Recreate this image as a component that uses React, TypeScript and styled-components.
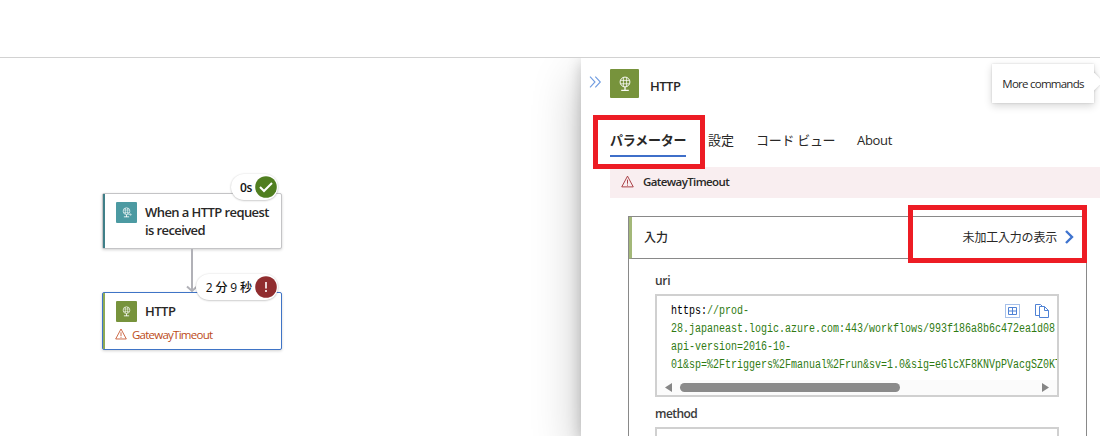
import React from 'react';
import styled, { createGlobalStyle } from 'styled-components';

const Global = createGlobalStyle`
  * { box-sizing: border-box; }
  html, body { margin: 0; overflow: hidden; background: #fff; }
  body { font-family: "Open Sans", "Noto Sans CJK JP", sans-serif; color: #292827; font-size: 13px; }
`;

const Page = styled.div`
  width: 1100px;
  height: 436px;
  display: flex;
  flex-direction: column;
  overflow: hidden;
  position: relative;
`;
const TopBar = styled.header`
  flex: 0 0 58px;
  border-bottom: 1px solid #d2d2d2;
`;
const Main = styled.main`
  flex: 1;
  display: flex;
  min-height: 0;
  overflow: hidden;
`;
const Canvas = styled.section`
  flex: 0 0 581px;
  position: relative;
`;
const Text = styled.span<{ $size?: number; $weight?: number; $spacing?: number; $color?: string }>`
  font-size: ${p => p.$size ?? 13}px;
  font-weight: ${p => p.$weight ?? 400};
  letter-spacing: ${p => p.$spacing ?? 0}px;
  color: ${p => p.$color ?? '#292827'};
  white-space: nowrap;
`;

/* workflow canvas */
const Node = styled.div<{ $top: number; $height: number; $border: string; $accent: string; $accentWidth: number }>`
  position: absolute;
  left: 102px;
  top: ${p => p.$top}px;
  width: 180px;
  height: ${p => p.$height}px;
  background: #fff;
  border: 1px solid ${p => p.$border};
  border-radius: 2px;
  box-shadow: 0 1px 3px rgba(0, 0, 0, 0.18);
  &::before {
    content: '';
    position: absolute;
    left: 0;
    top: 0;
    bottom: 0;
    width: ${p => p.$accentWidth}px;
    background: ${p => p.$accent};
  }
`;
const NodeRow = styled.div`
  display: flex;
  gap: 8px;
  padding: 8px 0 0 13px;
`;
const NodeTitle = styled.div`
  display: flex;
  flex-direction: column;
  line-height: 18px;
  padding-top: 1px;
`;
const NodeError = styled.div`
  display: flex;
  align-items: center;
  gap: 5px;
  height: 16px;
  padding-left: 12px;
  margin-top: 4px;
`;
const Tile = styled.div<{ $size: number; $color: string }>`
  flex: none;
  width: ${p => p.$size}px;
  height: ${p => p.$size}px;
  border-radius: 1px;
  background: ${p => p.$color};
  display: flex;
  align-items: center;
  justify-content: center;
`;
const Pill = styled.div<{ $top: number; $left: number; $width: number }>`
  position: absolute;
  top: ${p => p.$top}px;
  left: ${p => p.$left}px;
  width: ${p => p.$width}px;
  height: 26px;
  border-radius: 13px;
  background: #fff;
  box-shadow: 0 0.5px 2px rgba(0, 0, 0, 0.3);
  display: flex;
  align-items: center;
  justify-content: flex-end;
  gap: 3px;
  padding-right: 1px;
`;
const Arrow = styled.svg`
  position: absolute;
  left: 184px;
  top: 191px;
`;

/* details panel */
const Panel = styled.aside`
  flex: 1;
  min-width: 0;
  background: #fff;
  box-shadow: 0 20px 46px rgba(0, 0, 0, 0.24), 0 4px 14px rgba(0, 0, 0, 0.2);
  display: flex;
  flex-direction: column;
  position: relative;
  & > * { flex-shrink: 0; }
`;
const PanelHeader = styled.div`
  display: flex;
  align-items: center;
  height: 40px;
  margin-top: 5px;
  padding: 1px 0 0 8px;
`;
const HeaderTitle = styled.div`
  margin: 5px 0 0 11px;
`;
const Collapse = styled.div`
  width: 21px;
  display: flex;
  padding-bottom: 3px;
`;
const Tooltip = styled.div`
  position: absolute;
  left: 411px;
  top: 6px;
  width: 102px;
  height: 39px;
  background: #fff;
  box-shadow: 0 3px 8px rgba(0, 0, 0, 0.16), 0 0 2px rgba(0, 0, 0, 0.15);
  display: flex;
  align-items: center;
  justify-content: center;
`;
const Beak = styled.div`
  position: absolute;
  left: 513px;
  top: 5px;
  width: 6px;
  height: 36px;
  overflow: hidden;
  &::after {
    content: '';
    position: absolute;
    left: -9px;
    top: 11px;
    width: 15px;
    height: 15px;
    background: #fff;
    box-shadow: 0 0 3px rgba(0, 0, 0, 0.2);
    transform: rotate(45deg);
  }
`;
const Tabs = styled.nav`
  display: flex;
  gap: 22px;
  height: 31px;
  margin: 23px 0 0 29px;
`;
const Tab = styled.div<{ $active?: boolean; $width: number }>`
  width: ${p => p.$width}px;
  height: 31px;
  line-height: 28px;
  border-bottom: 2px solid ${p => (p.$active ? '#3f6fc9' : 'transparent')};
`;
const ErrorBar = styled.div`
  display: flex;
  align-items: center;
  gap: 9px;
  height: 31px;
  margin: 10px 0 0 29px;
  padding: 0 0 2px 11px;
  background: #f9eef0;
`;
const Card = styled.div`
  width: 459px;
  margin: 18px 0 0 47px;
  border: 1px solid #898989;
  border-bottom: 0;
`;
const CardHeader = styled.div`
  height: 42px;
  border-bottom: 1px solid #898989;
  border-left: 3px solid #a3b878;
  display: flex;
  align-items: center;
  justify-content: space-between;
  padding: 0 12px 1px 12px;
`;
const RawLink = styled.div`
  display: flex;
  align-items: center;
  gap: 8px;
`;
const CardBody = styled.div`
  padding: 12px 27px 0 26px;
`;
const Label = styled.div`
  height: 23px;
  line-height: 18px;
`;
const Field = styled.div<{ $height: number }>`
  position: relative;
  width: 404px;
  height: ${p => p.$height}px;
  border: 2px solid #d0d0d0;
  margin-bottom: 7px;
  overflow: hidden;
  display: flex;
  flex-direction: column;
`;
const Code = styled.pre`
  flex: 1;
  width: 480px;
  margin: 0;
  padding: 6px 0 0 16.8px;
  font-family: "Liberation Mono", monospace;
  font-size: 12px;
  line-height: 18px;
  transform: scaleX(0.8333);
  transform-origin: 0 0;
  color: #2f7a12;
`;
const Scheme = styled.span`
  color: #000;
`;
const FieldTools = styled.div`
  position: absolute;
  right: 8px;
  top: 8px;
  display: flex;
  gap: 15px;
`;
const ScrollBar = styled.div`
  height: 15px;
  background: #fbfbfb;
  display: flex;
  align-items: center;
  padding: 0 8px;
`;
const Thumb = styled.div`
  width: 220px;
  height: 9px;
  border-radius: 5px;
  background: #8a8a8a;
  margin: 0 auto 0 8px;
`;
const Highlight = styled.div<{ $x: number; $y: number; $w: number; $h: number }>`
  position: absolute;
  left: ${p => p.$x}px;
  top: ${p => p.$y}px;
  width: ${p => p.$w}px;
  height: ${p => p.$h}px;
  border: 5px solid #ed1c24;
`;

const Globe = ({ size, arrow }: { size: number; arrow?: boolean }) => (
  <svg width={size} height={size} viewBox="0 0 16 16" fill="none" stroke="#fff" strokeWidth="1" strokeOpacity=".95">
    <circle cx="8" cy="6" r="4.9" />
    <path d="M3.6 4.4h8.8M3.6 7.8h8.8M6.4 1.4v9.2M9.6 1.4v9.2" strokeWidth=".8" />
    <path d="M8 11v3.6M4.2 14.3h7.6" strokeWidth="1.3" />
    {arrow && <path d="M11 11h4M13.5 9.6 15 11l-1.5 1.4" strokeWidth=".9" />}
  </svg>
);
const Warning = ({ size, color }: { size: number; color: string }) => (
  <svg width={size} height={size} viewBox="0 0 14 14" fill="none" stroke={color}>
    <path d="M7 1.2 13.2 12.8H.8Z" />
    <path d="M7 5v4.4M7 10.3v1.2" />
  </svg>
);

export default function App() {
  return (
    <>
      <Global />
      <Page>
        <TopBar />
        <Main>
          <Canvas>
            <Node $top={135} $height={56} $border="#c4c4c6" $accent="#3f7f88" $accentWidth={2}>
              <NodeRow>
                <Tile $size={21} $color="#4c9aa2"><Globe size={11} arrow /></Tile>
                <NodeTitle>
                  <Text $weight={600} $spacing={-0.58}>When a HTTP request</Text>
                  <Text $weight={600} $spacing={-0.6}>is received</Text>
                </NodeTitle>
              </NodeRow>
            </Node>
            <Arrow width="16" height="44" viewBox="0 0 16 44" fill="none" stroke="#b1b1b7" strokeWidth="2">
              <path d="M8 0v42M3 37.5l5 4.5 5-4.5" />
            </Arrow>
            <Node $top={234} $height={58} $border="#3f74c6" $accent="#8faa55" $accentWidth={2}>
              <NodeRow>
                <Tile $size={21} $color="#77933c"><Globe size={11} /></Tile>
                <NodeTitle>
                  <Text $weight={600} $spacing={-0.5}>HTTP</Text>
                </NodeTitle>
              </NodeRow>
              <NodeError>
                <Warning size={12} color="#c4532d" />
                <Text $size={11.5} $spacing={-0.75} $color="#bc4b20">GatewayTimeout</Text>
              </NodeError>
            </Node>
            <Pill $top={116} $left={231} $width={47}>
              <Text $size={12} $weight={600} $spacing={-0.4} $color="#111">0s</Text>
              <svg width="22" height="22" viewBox="0 0 22 22">
                <circle cx="11" cy="11" r="10.8" fill="#507e20" />
                <path d="m5 11 4 4 8-8" fill="none" stroke="#fff" strokeWidth="2" />
              </svg>
            </Pill>
            <Pill $top={216} $left={196} $width={82}>
              <Text $size={12} $weight={500} $spacing={-0.1} $color="#111">2 分 9 秒</Text>
              <svg width="22" height="22" viewBox="0 0 22 22">
                <circle cx="11" cy="11" r="10.8" fill="#902d2f" />
                <path d="M11 6v6.5M11 14v2" fill="none" stroke="#fff" strokeWidth="1.6" />
              </svg>
            </Pill>
          </Canvas>
          <Panel>
            <PanelHeader>
              <Collapse>
                <svg width="13" height="12" viewBox="0 0 13 12" fill="none" stroke="#6f9be0" strokeWidth="1.1">
                  <path d="m1 .7 5 5.3-5 5.3M6.3.7l5 5.3-5 5.3" />
                </svg>
              </Collapse>
              <Tile $size={29} $color="#77933c"><Globe size={16} /></Tile>
              <HeaderTitle><Text $weight={600} $spacing={-0.5}>HTTP</Text></HeaderTitle>
            </PanelHeader>
            <Tooltip><Text $size={11.5} $spacing={-0.75}>More commands</Text></Tooltip>
            <Beak />
            <Tabs>
              <Tab $active $width={76}><Text $weight={700} $spacing={-0.2}>パラメーター</Text></Tab>
              <Tab $width={26}><Text>設定</Text></Tab>
              <Tab $width={79}><Text $spacing={-0.3}>コード ビュー</Text></Tab>
              <Tab $width={35}><Text $spacing={-0.3}>About</Text></Tab>
            </Tabs>
            <ErrorBar>
              <Warning size={13} color="#a4343a" />
              <Text $size={11.5} $weight={600} $spacing={-0.6}>GatewayTimeout</Text>
            </ErrorBar>
            <Card>
              <CardHeader>
                <Text $size={12} $weight={500}>入力</Text>
                <RawLink>
                  <Text $size={12} $spacing={-0.2}>未加工入力の表示</Text>
                  <svg width="9" height="14" viewBox="0 0 9 14" fill="none" stroke="#3f74cf" strokeWidth="2.4">
                    <path d="m1 1 6 6-6 6" />
                  </svg>
                </RawLink>
              </CardHeader>
              <CardBody>
                <Label><Text $size={12} $weight={600} $spacing={-0.3} $color="#3a3a3a">uri</Text></Label>
                <Field $height={103}>
                  <Code>
                    <Scheme>https:</Scheme>{'//prod-\n28.japaneast.logic.azure.com:443/workflows/993f186a8b6c472ea1d08\napi-version=2016-10-\n01&sp=%2Ftriggers%2Fmanual%2Frun&sv=1.0&sig=eGlcXF8KNVpPVacgSZ0KT'}
                  </Code>
                  <FieldTools>
                    <svg width="15" height="14" viewBox="0 0 15 14" fill="none" stroke="#4f82d5">
                      <path d="M.5.5h14v13H.5z" strokeDasharray="1 1" />
                      <path d="M3.5 3.5h8v7h-8zM7.5 3.5v7M3.5 7h8" />
                    </svg>
                    <svg width="14" height="14" viewBox="0 0 14 14" fill="none" stroke="#4f82d5">
                      <path d="M4 11.5H.5V.5h5l2 2M4.5 2.5h5l4 4v7h-9zM9.5 2.5v4h4" />
                    </svg>
                  </FieldTools>
                  <ScrollBar>
                    <svg width="7" height="9" viewBox="0 0 7 9"><path d="M7 0v9L0 4.5z" fill="#858585" /></svg>
                    <Thumb />
                    <svg width="7" height="9" viewBox="0 0 7 9"><path d="M0 0v9l7-4.5z" fill="#858585" /></svg>
                  </ScrollBar>
                </Field>
                <Label><Text $size={12} $weight={600} $spacing={-0.55} $color="#3a3a3a">method</Text></Label>
                <Field $height={60} />
              </CardBody>
            </Card>
          </Panel>
        </Main>
        <Highlight $x={593} $y={115} $w={112} $h={54} />
        <Highlight $x={908} $y={205} $w={179} $h={58} />
      </Page>
    </>
  );
}
